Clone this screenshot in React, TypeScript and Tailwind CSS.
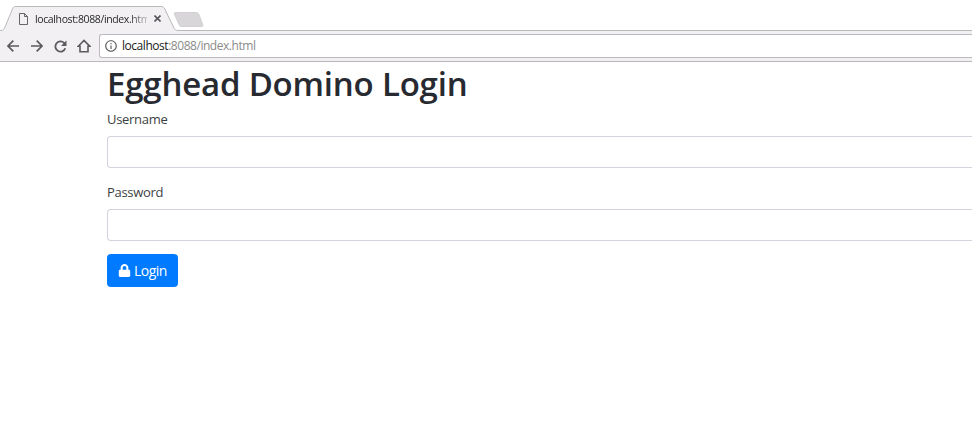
import { MdInfoOutline } from "react-icons/md";
import { FaLock } from "react-icons/fa";

function TabStrip() {
  return (
    <div className="relative h-[31px] bg-white">
      <svg className="absolute inset-0" width="972" height="31" viewBox="0 0 972 31" fill="none">
        <path d="M0 30.5H1C3 30.5 4 29.5 5 27L12.5 9C13.2 7.2 14 6.5 16 6.5H161C163 6.5 164 7.2 164.8 9L173.5 27C174.5 29.5 175.5 30.5 178 30.5H972V31H0Z" fill="#f2f0f3" />
        <path d="M0 30.5H1C3 30.5 4 29.5 5 27L12.5 9C13.2 7.2 14 6.5 16 6.5H161C163 6.5 164 7.2 164.8 9L173.5 27C174.5 29.5 175.5 30.5 178 30.5H972" stroke="#b9b8ba" />
        <path d="M175.5 12.5H195.5C197.5 12.5 198.3 13 199 14.5L202.7 24.5C203.2 26 203 26.5 201.500 26.500H182C180.500 26.500 179.500 26 179 24.500L174.500 14.500C174 13 174.300 12.500 175.500 12.500Z" fill="#d8d6d9" stroke="#cbc9cc" strokeWidth="0.8" />
      </svg>
      <div className="relative flex h-full items-center pl-[19px] pt-[6px]">
        <svg width="9" height="12" viewBox="0 0 9 12" fill="none" stroke="#66656a">
          <path d="M0.5 0.5H5.5L8.5 3.5V11.5H0.5ZM5.5 0.5V3.5H8.5" />
        </svg>
        <span className="ml-[7px] w-[112px] whitespace-nowrap bg-gradient-to-r from-[#222] from-84% to-[#22222240] bg-clip-text text-[10.5px] leading-4 tracking-[-0.38px] text-transparent">
          localhost:8088/index.htm
        </span>
        <svg className="ml-[7px]" width="7" height="7" viewBox="0 0 7 7" stroke="#57565b" strokeWidth="1.6">
          <path d="M0.5 0.5L6.5 6.5M6.5 0.5L0.5 6.5" />
        </svg>
      </div>
    </div>
  );
}

function Toolbar() {
  return (
    <div className="flex h-[31px] items-center border-b border-[#b9b8ba] bg-[#f2f0f3] pl-[7px] text-[#5b5a5e]">
      <svg width="12" height="12" viewBox="0 0 12 12" fill="none" stroke="currentColor" strokeWidth="1.7">
        <path d="M12 6H1.3M6.300 0.700L1 6L6.300 11.300" />
      </svg>
      <svg className="ml-[12px]" width="12" height="12" viewBox="0 0 12 12" fill="none" stroke="currentColor" strokeWidth="1.7">
        <path d="M0 6H10.700M5.700 0.700L11 6L5.700 11.300" />
      </svg>
      <svg className="ml-[11px]" width="13" height="13" viewBox="0 0 13 13" fill="none" stroke="currentColor" strokeWidth="1.8">
        <path d="M11.300 8.300A5.100 5.100 0 1 1 10 2.800L11 3.800" />
        <path d="M12.500 0.500V6H7Z" fill="currentColor" stroke="none" />
      </svg>
      <svg className="ml-[10px]" width="14" height="14" viewBox="0 0 14 14" fill="none" stroke="currentColor" strokeWidth="1.6">
        <path d="M1.3 7.2L7 1.5L12.7 7.2H11V12.7H3V7.2Z" />
      </svg>
      <div className="ml-[8px] flex h-6 flex-1 items-center rounded-l-[3px] border border-r-0 border-[#bcbabe] bg-white pl-[4px]">
        <MdInfoOutline size={14} />
        <span className="ml-[4px] text-[12px] leading-4 tracking-[-0.46px] text-[#8b8b8b]">
          <span className="text-[#222]">localhost</span>:8088/index.html
        </span>
      </div>
    </div>
  );
}

function Field({ label, type }: { label: string; type: string }) {
  return (
    <label className="mb-[14px] block text-[13px] leading-[21px] tracking-[-0.3px] text-[#3c3f43]">
      {label}
      <input type={type} className="mt-[6px] block h-8 w-full rounded-l-[4px] border border-r-0 border-[#d2d3dc] bg-white px-3 outline-none" />
    </label>
  );
}

export default function App() {
  return (
    <div className="h-[443px] w-[972px] overflow-hidden bg-white font-['Open_Sans','Noto_Sans',sans-serif]">
      <TabStrip />
      <Toolbar />
      <main className="pl-[107px]">
        <h1 className="mb-[7px] h-10 whitespace-nowrap text-[33px] font-semibold leading-[43px] tracking-[-0.2px] text-[#272a30]">Egghead Domino Login</h1>
        <Field label="Username" type="text" />
        <Field label="Password" type="password" />
        <button className="-mt-px flex h-[33px] w-[71px] items-center rounded-[4px] bg-[#007bff] pl-[11px] text-[14px] tracking-[-0.5px] text-white">
          <FaLock size={13} />
          <span className="ml-[3px]">Login</span>
        </button>
      </main>
    </div>
  );
}
